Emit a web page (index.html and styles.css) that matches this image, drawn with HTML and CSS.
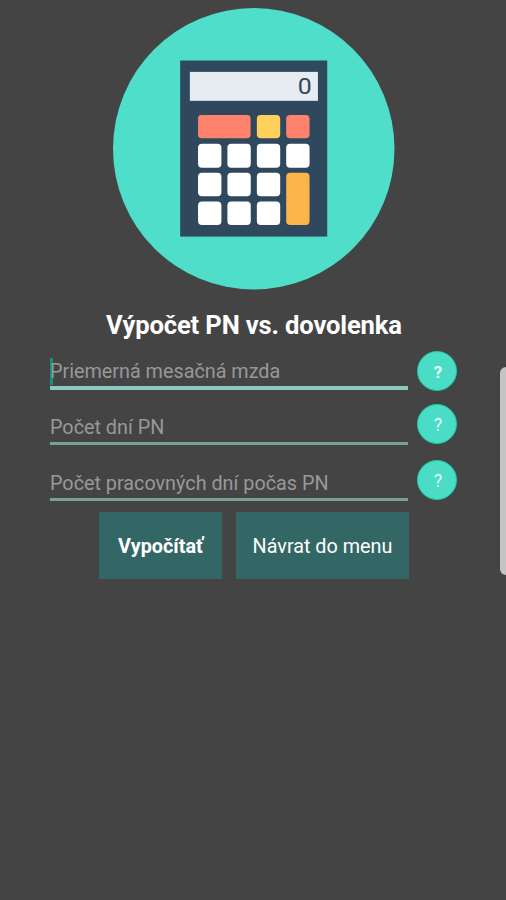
FILE: index.html
```html
<!DOCTYPE html>
<html lang="sk">
<head>
<meta charset="utf-8">
<title>Výpočet PN vs. dovolenka</title>
<link rel="stylesheet" href="styles.css">
</head>
<body>
<main class="screen">
  <svg class="logo" viewBox="0 0 282 282" aria-hidden="true">
    <circle cx="141" cy="141" r="141" fill="#4edec9"/>
    <rect x="67.3" y="52.6" width="147.3" height="176.4" fill="#30485d"/>
    <rect x="77" y="64" width="128.3" height="29" fill="#e7ebf2"/>
    <text class="digit" x="185" y="86.3" textLength="14" lengthAdjust="spacingAndGlyphs">0</text>
    <g fill="#fff">
      <rect x="85.2" y="136" width="23.4" height="24" rx="4"/>
      <rect x="114.6" y="136" width="23.4" height="24" rx="4"/>
      <rect x="144.1" y="136" width="23.4" height="24" rx="4"/>
      <rect x="173.5" y="136" width="23.4" height="24" rx="4"/>
      <rect x="85.2" y="165" width="23.4" height="23.5" rx="4"/>
      <rect x="114.6" y="165" width="23.4" height="23.5" rx="4"/>
      <rect x="144.1" y="165" width="23.4" height="23.5" rx="4"/>
      <rect x="85.2" y="193.8" width="23.4" height="23.7" rx="4"/>
      <rect x="114.6" y="193.8" width="23.4" height="23.7" rx="4"/>
      <rect x="144.1" y="193.8" width="23.4" height="23.7" rx="4"/>
    </g>
    <rect x="85.2" y="107.3" width="52.6" height="23.2" rx="3.5" fill="#ff826c"/>
    <rect x="144.1" y="107.3" width="23.4" height="23.2" rx="4" fill="#ffd05b"/>
    <rect x="173.5" y="107.3" width="23.4" height="23.2" rx="4" fill="#ff826c"/>
    <rect x="173.5" y="165" width="23.4" height="52.5" rx="4" fill="#fbb44a"/>
  </svg>
  <h1 class="title">Výpočet PN vs. dovolenka</h1>
  <form class="form">
    <div class="fields">
      <div class="field focused"><span class="hint">Priemerná mesačná mzda</span></div>
      <div class="field"><span class="hint">Počet dní PN</span></div>
      <div class="field"><span class="hint">Počet pracovných dní počas PN</span></div>
    </div>
    <div class="helps">
      <button type="button" class="help strong">?</button>
      <button type="button" class="help">?</button>
      <button type="button" class="help">?</button>
    </div>
  </form>
  <div class="actions">
    <button type="button" class="action calc">Vypočítať</button>
    <button type="button" class="action back">Návrat do menu</button>
  </div>
</main>
<div class="edge-handle"></div>
</body>
</html>
```
FILE: styles.css
```css
* { box-sizing: border-box; }
body {
  margin: 0;
  height: 900px;
  overflow: hidden;
  background: #444;
  color: #fff;
  font-family: Roboto, "Liberation Sans", sans-serif;
}
.screen { padding-top: 7.5px; }
.logo {
  display: block;
  width: 281.5px;
  height: 281.5px;
  margin-left: 112.8px;
  overflow: visible;
}
.digit { font: 22px Roboto, sans-serif; fill: #30485d; }
.title {
  margin: 19px 0 0 106px;
  height: 34px;
  line-height: 34px;
  font-size: 25.6px;
  letter-spacing: -0.15px;
  font-weight: 700;
  white-space: nowrap;
}
.form {
  display: flex;
  gap: 9px;
  height: 160px;
  margin-left: 50px;
}
.fields { width: 358px; padding-top: 4px; }
.field {
  height: 56px;
  padding-top: 24px;
  border-bottom: 3px solid #789f99;
  color: #989898;
  font-size: 19.8px;
  line-height: 29px;
  white-space: nowrap;
}
.field.focused {
  height: 44px;
  padding-top: 11px;
  border-bottom: 4px solid #8bcabf;
  margin-bottom: -1px;
}
.focused .hint {
  position: relative;
}
.focused .hint::before {
  content: "";
  position: absolute;
  z-index: -1;
  left: 0;
  top: -2px;
  width: 3px;
  height: 27px;
  background: #168f7b;
}
.helps { padding-top: 9px; }
.help {
  display: block;
  width: 40px;
  height: 40px;
  margin: 0 0 16px;
  padding: 2px 0 0 2px;
  border: 1.5px solid #20c6a5;
  border-radius: 50%;
  background: #4adcc5;
  color: #e5fffa;
  font: 18px/34px Roboto, sans-serif;
}
.help.strong { margin-bottom: 13px; font-weight: 700; font-size: 17px; }
.actions {
  display: flex;
  gap: 14px;
  margin: 10px 0 0 99px;
}
.action {
  height: 67px;
  padding: 1px 0 0;
  border: 0;
  background: #336765;
  color: #fff;
  font: 19.8px Roboto, sans-serif;
  white-space: nowrap;
}
.calc { width: 123px; font-weight: 700; }
.back { width: 173px; }
.edge-handle {
  position: absolute;
  top: 367px;
  right: 0;
  width: 6px;
  height: 208px;
  border-radius: 6px 0 0 6px;
  background: #c4c4c4;
}
```
